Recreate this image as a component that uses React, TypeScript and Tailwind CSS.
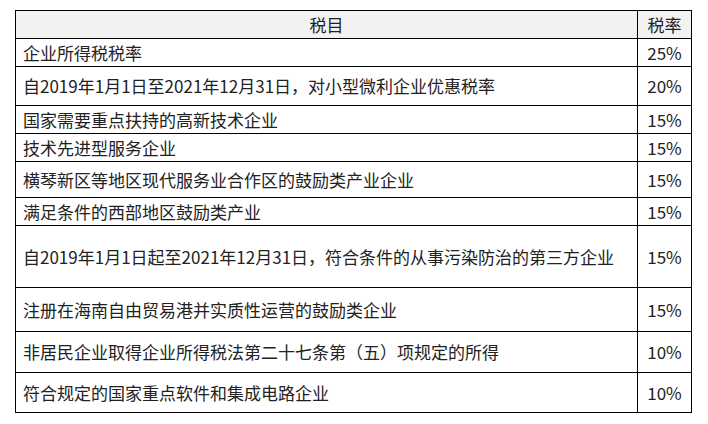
const rows: { name: string; rate: string; h: string }[] = [
  { name: '企业所得税税率', rate: '25%', h: 'h-[28px]' },
  { name: '自2019年1月1日至2021年12月31日，对小型微利企业优惠税率', rate: '20%', h: 'h-[39px]' },
  { name: '国家需要重点扶持的高新技术企业', rate: '15%', h: 'h-[28px]' },
  { name: '技术先进型服务企业', rate: '15%', h: 'h-[28px]' },
  { name: '横琴新区等地区现代服务业合作区的鼓励类产业企业', rate: '15%', h: 'h-[36px]' },
  { name: '满足条件的西部地区鼓励类产业', rate: '15%', h: 'h-[28px]' },
  { name: '自2019年1月1日起至2021年12月31日，符合条件的从事污染防治的第三方企业', rate: '15%', h: 'h-[62px]' },
  { name: '注册在海南自由贸易港并实质性运营的鼓励类企业', rate: '15%', h: 'h-[44px]' },
  { name: '非居民企业取得企业所得税法第二十七条第（五）项规定的所得', rate: '10%', h: 'h-[41px]' },
  { name: '符合规定的国家重点软件和集成电路企业', rate: '10%', h: 'h-[40px]' },
];

export default function App() {
  return (
    <div className="min-h-screen bg-white pl-[15px] pt-[10px] font-['Noto_Sans_CJK_SC',sans-serif] text-[17px] text-[#222]">
      <div className="w-[677px] border-x border-t border-black">
        <div className="flex h-[28px] border-b border-black bg-[#f2f2f2]">
          <div className="flex w-[622px] items-center justify-center border-r border-black">税目</div>
          <div className="flex flex-1 items-center justify-center">税率</div>
        </div>
        {rows.map((row) => (
          <div key={row.name} className={`flex border-b border-black ${row.h}`}>
            <div className="flex w-[622px] items-center whitespace-nowrap border-r border-black pl-[7px]">
              {row.name}
            </div>
            <div className="flex flex-1 items-center justify-center">{row.rate}</div>
          </div>
        ))}
      </div>
    </div>
  );
}
